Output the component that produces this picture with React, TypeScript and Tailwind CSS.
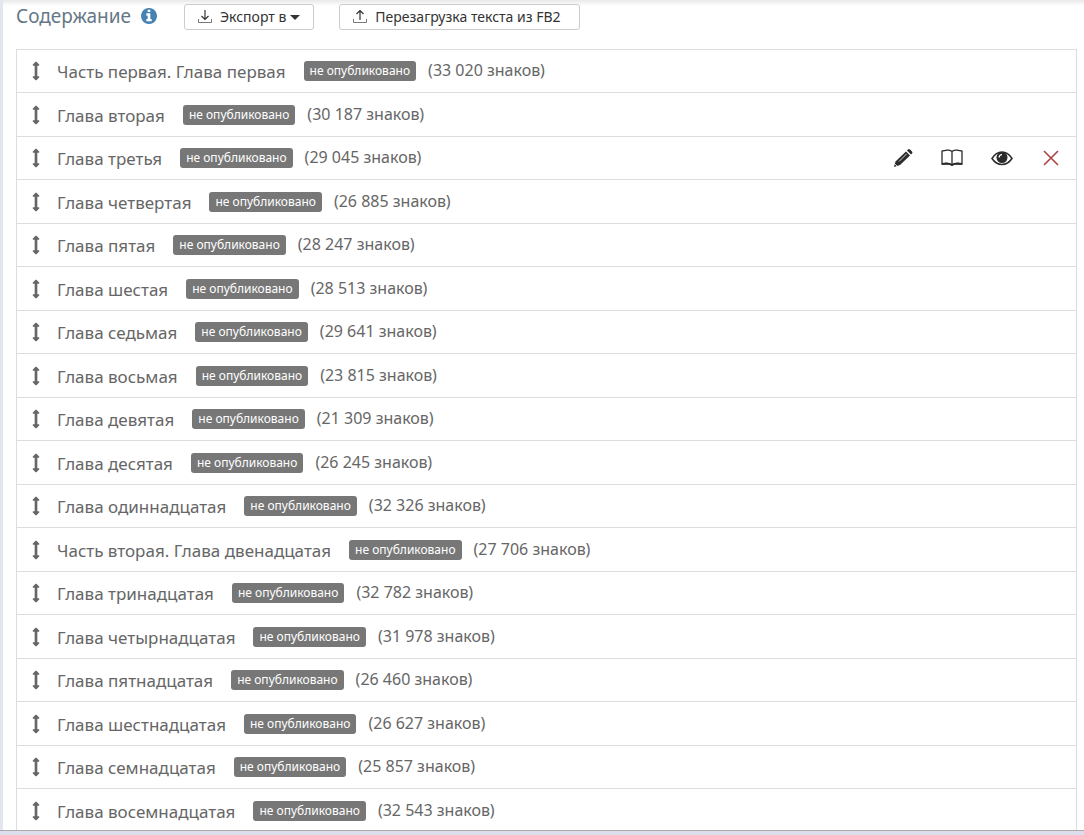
import React from "react";

type Chapter = { title: string; count: string };

const chapters: Chapter[] = [
  { title: "Часть первая. Глава первая", count: "33 020" },
  { title: "Глава вторая", count: "30 187" },
  { title: "Глава третья", count: "29 045" },
  { title: "Глава четвертая", count: "26 885" },
  { title: "Глава пятая", count: "28 247" },
  { title: "Глава шестая", count: "28 513" },
  { title: "Глава седьмая", count: "29 641" },
  { title: "Глава восьмая", count: "23 815" },
  { title: "Глава девятая", count: "21 309" },
  { title: "Глава десятая", count: "26 245" },
  { title: "Глава одиннадцатая", count: "32 326" },
  { title: "Часть вторая. Глава двенадцатая", count: "27 706" },
  { title: "Глава тринадцатая", count: "32 782" },
  { title: "Глава четырнадцатая", count: "31 978" },
  { title: "Глава пятнадцатая", count: "26 460" },
  { title: "Глава шестнадцатая", count: "26 627" },
  { title: "Глава семнадцатая", count: "25 857" },
  { title: "Глава восемнадцатая", count: "32 543" },
];

const activeRow = 2;

function MoveIcon() {
  return (
    <svg viewBox="0 0 768 1792" className="h-5 w-2 shrink-0" fill="currentColor" aria-hidden="true">
      <path d="M704 320q0 26-19 45t-45 19h-128v1024h128q26 0 45 19t19 45-19 45l-256 256q-19 19-45 19t-45-19l-256-256q-19-19-19-45t19-45 45-19h128v-1024h-128q-26 0-45-19t-19-45 19-45l256-256q19-19 45-19t45 19l256 256q19 19 19 45z" />
    </svg>
  );
}

function InfoIcon() {
  return (
    <svg viewBox="128 128 1536 1536" className="size-4" fill="currentColor" aria-hidden="true">
      <path d="M1152 1376v-160q0-14-9-23t-23-9h-96v-512q0-14-9-23t-23-9h-320q-14 0-23 9t-9 23v160q0 14 9 23t23 9h96v320h-96q-14 0-23 9t-9 23v160q0 14 9 23t23 9h448q14 0 23-9t9-23zm-128-896v-160q0-14-9-23t-23-9h-192q-14 0-23 9t-9 23v160q0 14 9 23t23 9h192q14 0 23-9t9-23zm640 416q0 209-103 385.5t-279.5 279.5-385.5 103-385.5-103-279.5-279.5-103-385.5 103-385.5 279.5-279.5 385.5-103 385.5 103 279.5 279.5 103 385.5z" />
    </svg>
  );
}

function TrayIcon({ up = false }: { up?: boolean }) {
  return (
    <svg viewBox="0 0 14 14" className="size-3.5" fill="none" stroke="currentColor" aria-hidden="true">
      <path d="M0.5 9v3.500h13V9" stroke="#777" />
      <path d={up ? "M7 10V0.500M3.500 4L7 0.500l3.500 3.500" : "M7 0v9.500M3.500 6L7 9.500 10.500 6"} strokeWidth="1.2" />
    </svg>
  );
}

function RowActions() {
  return (
    <div className="ml-auto flex items-center gap-7 pr-[15px] text-[#2b2b2b]">
      <button type="button" aria-label="Редактировать">
        <svg viewBox="0 0 20 20" className="size-5" fill="currentColor" aria-hidden="true">
          <path d="M14 2.500l4 4 1-1q1-1 0-2l-2-2q-1-1-2 0zM13 3.500l4 4L7 17l-6 2 1.500-5.500z" />
          <path d="M6 13.500l7.500-7.500M2 16l2 2" stroke="#fff" strokeWidth=".8" />
        </svg>
      </button>
      <button type="button" aria-label="Читать">
        <svg viewBox="0 0 22 18" className="h-[18px] w-[22px]" fill="none" stroke="currentColor" aria-hidden="true">
          <path d="M11 2.500Q9 1 6 1.200L1 2v13l4.500-.5Q9 14.500 11 16q2-1.500 5.500-1.500L21 15V2l-5-.8Q13 1 11 2.500zV16" strokeWidth="1.3" />
          <path d="M1 15l4.500-.5Q9 14.500 11 16q2-1.500 5.500-1.500L21 15" strokeWidth="2" />
        </svg>
      </button>
      <button type="button" aria-label="Просмотр">
        <svg viewBox="0 0 22 16" className="h-4 w-[22px]" aria-hidden="true">
          <path d="M1 8.500Q5 2 11 2t10 6.500Q17 14.500 11 14.500T1 8.500z" fill="none" stroke="currentColor" strokeWidth="1.500" />
          <circle cx="11" cy="7.500" r="5.500" fill="currentColor" />
          <path d="M8.200 7.500Q8.200 4.700 11 4.700" fill="none" stroke="#fff" strokeWidth="1.200" />
        </svg>
      </button>
      <button type="button" aria-label="Удалить" className="text-[#a94442]">
        <svg viewBox="0 0 20 20" className="size-5" fill="none" stroke="currentColor" strokeWidth="1.6" aria-hidden="true">
          <path d="M3 3l14 14M17 3L3 17" />
        </svg>
      </button>
    </div>
  );
}

export default function App() {
  return (
    <div className="flex h-screen flex-col bg-white font-['Noto_Sans',sans-serif] text-[#666]">
      <main className="min-h-0 flex-1 overflow-hidden border-l-3 border-[#e1e6ef] bg-linear-to-b from-[#e9e9e9] to-white to-[6px] pl-[13px] pr-[7px]">
        <header className="flex h-[49px] items-start pt-1">
          <h1 className="text-[19px] leading-6 text-[#657786]">Содержание</h1>
          <a href="#info" aria-label="Справка" className="ml-[10px] mt-1 text-[#4682b4]">
            <InfoIcon />
          </a>
          <div className="ml-[27px] flex gap-[25px]">
            <button type="button" className="flex h-[26px] items-center gap-2 rounded-[3px] border border-[#ccc] bg-white px-[13px] text-sm text-[#333]">
              <TrayIcon />
              <span className="flex items-center gap-1">
                Экспорт в
                <svg viewBox="0 0 10 5" className="h-[5px] w-2.5" fill="currentColor" aria-hidden="true">
                  <path d="M0 0h10L5 5z" />
                </svg>
              </span>
            </button>
            <button type="button" className="flex h-[26px] min-w-[241px] items-center gap-2 rounded-[3px] border border-[#ccc] bg-white px-[13px] text-sm text-[#333]">
              <TrayIcon up />
              <span>Перезагрузка текста из FB2</span>
            </button>
          </div>
        </header>
        <ul className="border border-[#ddd]">
          {chapters.map((chapter, index) => (
            <li key={chapter.title} className="flex items-center border-b border-[#ddd] pl-[15px] odd:h-[43px] even:h-11">
              <MoveIcon />
              <a href="#chapter" className="ml-[17px] pt-0.5 text-[17px] leading-6">{chapter.title}</a>
              <span className="ml-[18px] rounded-[3px] bg-[#777] px-[6px] text-xs leading-5 text-white">не опубликовано</span>
              <span className="ml-3 pb-0.5 text-base leading-6">({chapter.count} знаков)</span>
              {index === activeRow && <RowActions />}
            </li>
          ))}
        </ul>
      </main>
      <footer className="h-[5px] shrink-0 border-t border-[#aaa] bg-[#dcdeee]" />
    </div>
  );
}
